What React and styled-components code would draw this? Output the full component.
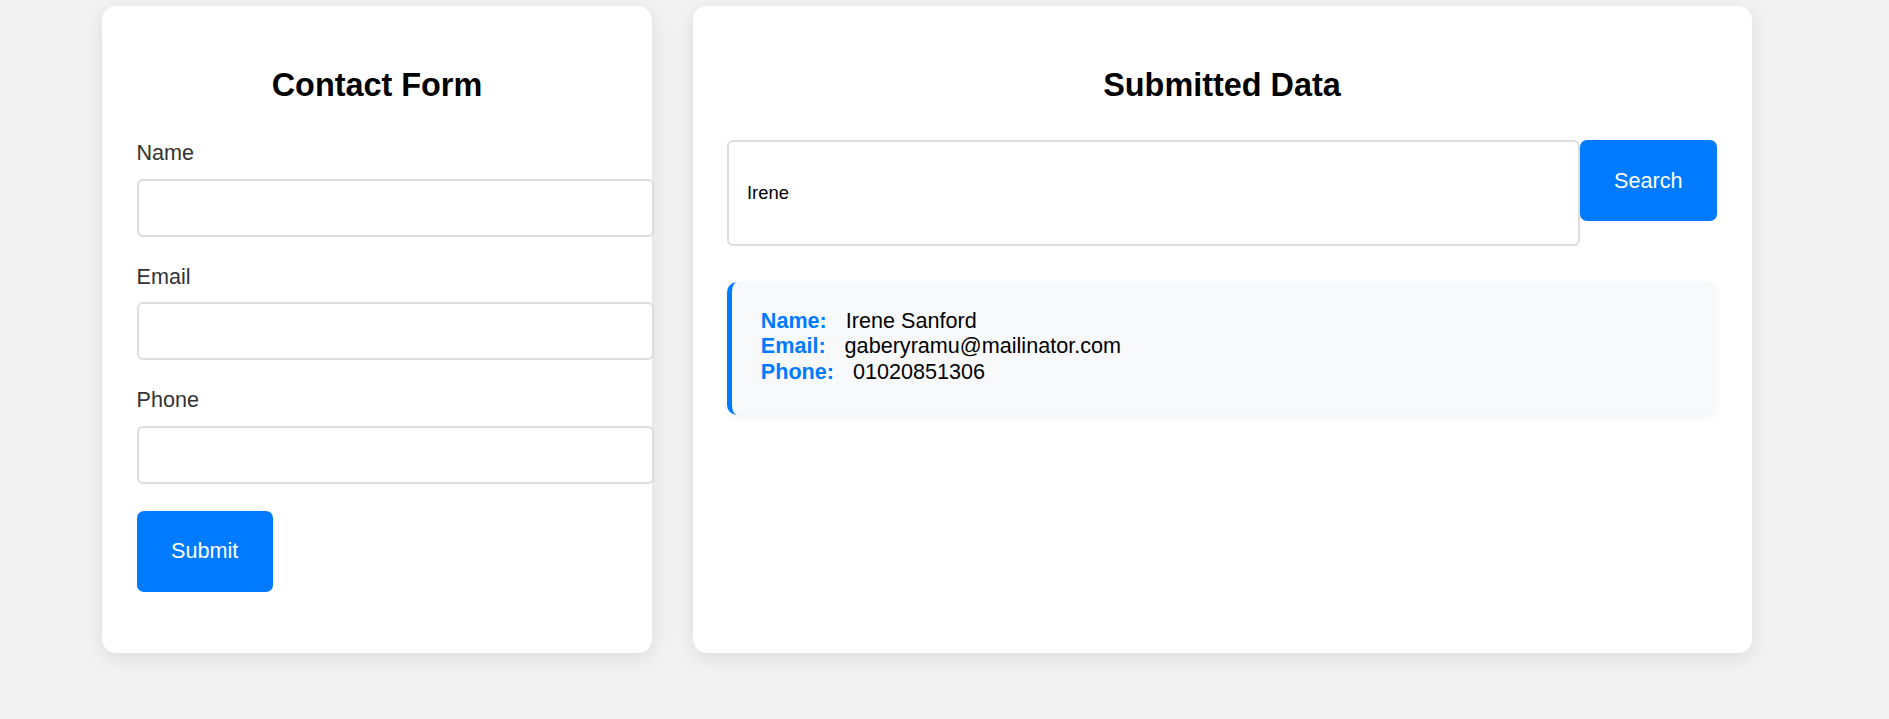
import React, { useState } from "react";
import styled, { createGlobalStyle } from "styled-components";

const GlobalStyle = createGlobalStyle`
  html, body {
    margin: 0;
    padding: 0;
    background: #f2f2f2;
    font-family: "Liberation Sans", Arial, sans-serif;
  }
  html {
    overflow-y: scroll;
  }
  ::-webkit-scrollbar {
    width: 15px;
  }
  ::-webkit-scrollbar-track {
    background: #f1f1f1;
  }
  ::-webkit-scrollbar-thumb {
    background: #c1c1c1;
    border-left: 3px solid #f1f1f1;
  }
`;

const Page = styled.div`
  display: flex;
  align-items: stretch;
  gap: 40.5px;
  padding: 6px 0 0 102px;
  min-height: 732px;
  box-sizing: border-box;
`;

const Card = styled.section`
  width: ${(p) => p.$width}px;
  align-self: flex-start;
  height: 647px;
  box-sizing: border-box;
  padding: 34.5px;
  background: #fff;
  border-radius: 14px;
  box-shadow: 0 5px 20px rgba(0, 0, 0, 0.09);
`;

const Title = styled.h2`
  margin: 26px 0 36.5px;
  font-size: 32.4px;
  line-height: 37px;
  font-weight: bold;
  text-align: center;
  color: #000;
`;

const Field = styled.div`
  margin-bottom: 27px;
`;

const Label = styled.label`
  display: block;
  margin-bottom: 13.5px;
  font-size: 21.6px;
  line-height: 25px;
  color: #333;
`;

const TextInput = styled.input`
  display: block;
  width: 100%;
  height: ${(p) => p.$height || 54}px;
  padding: 0 16px 0 ${(p) => p.$indent || 16}px;
  box-sizing: content-box;
  border: 2px solid #ddd;
  border-radius: 6px;
  font-family: inherit;
  font-size: 18.4px;
  color: #000;
  background: #fff;
  outline: none;
`;

const Button = styled.button`
  flex-shrink: 0;
  height: 81px;
  padding: 0 34.5px;
  margin: ${(p) => p.$margin || 0};
  border: none;
  border-radius: 7px;
  background: #007bff;
  color: #fff;
  font-family: inherit;
  font-size: 21.6px;
  cursor: pointer;
`;

const SearchRow = styled.div`
  display: flex;
  align-items: flex-start;
  margin: 2.5px 0 36px;

  ${TextInput} {
    flex: 1;
    width: auto;
    min-width: 0;
  }
`;

const Result = styled.div`
  padding: 25.6px 28.8px 31px;
  border-left: 5px solid #007bff;
  border-radius: 10px;
  background: #f8f9fa;
  box-shadow: 0 2px 6px rgba(0, 0, 0, 0.05);
`;

const Line = styled.div`
  font-size: 21.6px;
  line-height: 25.5px;
  color: #000;
`;

const Key = styled.strong`
  margin-right: 13px;
  color: #007bff;
`;

const entries = [
  { name: "Irene Sanford", email: "gaberyramu@mailinator.com", phone: "01020851306" },
];

export default function App() {
  const [query, setQuery] = useState("Irene");
  const found = entries.filter((e) => e.name.toLowerCase().includes(query.toLowerCase()));

  return (
    <>
      <GlobalStyle />
      <Page>
        {/* form */}
        <Card $width={550}>
          <Title>Contact Form</Title>
          <form onSubmit={(e) => e.preventDefault()}>
            <Field>
              <Label htmlFor="name">Name</Label>
              <TextInput id="name" type="text" />
            </Field>
            <Field>
              <Label htmlFor="email">Email</Label>
              <TextInput id="email" type="email" />
            </Field>
            <Field>
              <Label htmlFor="phone">Phone</Label>
              <TextInput id="phone" type="tel" />
            </Field>
            <Button type="submit" $margin="0">
              Submit
            </Button>
          </form>
        </Card>

        {/* submitted data */}
        <Card $width={1059}>
          <Title>Submitted Data</Title>
          <SearchRow>
            <TextInput
              $height={102}
              $indent={18}
              value={query}
              onChange={(e) => setQuery(e.target.value)}
            />
            <Button>Search</Button>
          </SearchRow>
          {found.map((e) => (
            <Result key={e.email}>
              <Line>
                <Key>Name:</Key> {e.name}
              </Line>
              <Line>
                <Key>Email:</Key> {e.email}
              </Line>
              <Line>
                <Key>Phone:</Key> {e.phone}
              </Line>
            </Result>
          ))}
        </Card>
      </Page>
    </>
  );
}
